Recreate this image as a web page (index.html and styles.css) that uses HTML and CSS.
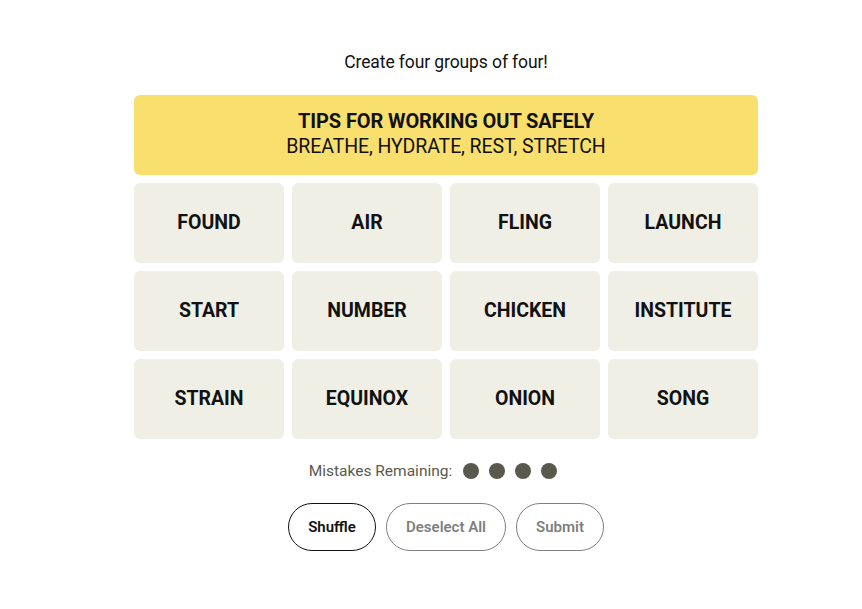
FILE: index.html
```html
<!DOCTYPE html>
<html lang="en">
<head>
  <meta charset="UTF-8" />
  <title>Connections</title>
  <link rel="stylesheet" href="styles.css">
</head>
<body>
  <div class="game">
    <p class="prompt">Create four groups of four!</p>

    <div class="board">
      <div class="solved yellow">
        <h3>TIPS FOR WORKING OUT SAFELY</h3>
        <p>BREATHE, HYDRATE, REST, STRETCH</p>
      </div>
      <div class="tiles">
        <div class="tile">FOUND</div>
        <div class="tile">AIR</div>
        <div class="tile">FLING</div>
        <div class="tile">LAUNCH</div>
        <div class="tile">START</div>
        <div class="tile">NUMBER</div>
        <div class="tile">CHICKEN</div>
        <div class="tile">INSTITUTE</div>
        <div class="tile">STRAIN</div>
        <div class="tile">EQUINOX</div>
        <div class="tile">ONION</div>
        <div class="tile">SONG</div>
      </div>
    </div>

    <div class="mistakes">
      <span>Mistakes Remaining:</span>
      <span class="dots"><i></i><i></i><i></i><i></i></span>
    </div>

    <div class="controls">
      <button class="btn active">Shuffle</button>
      <button class="btn wide">Deselect All</button>
      <button class="btn">Submit</button>
    </div>
  </div>
</body>
</html>
```

FILE: styles.css
```css
:root {
  --yellow: #f9df6d;
  --tile: #efefe6;
  --dot: #5a594e;
  --grey: #7f7f7f;
  --text: #121212;
  --radius: 6px;
}
* {
  margin: 0;
  padding: 0;
  box-sizing: border-box;
}
body {
  background: #fff;
  color: var(--text);
  font-family: Roboto, "Liberation Sans", sans-serif;
}
.game {
  width: 624px;
  margin-left: 134px;
  padding-top: 50px;
  display: flex;
  flex-direction: column;
  align-items: center;
}
.prompt {
  font-size: 17.5px;
  line-height: 24px;
  letter-spacing: -0.1px;
  margin-bottom: 21px;
}
.board {
  width: 100%;
  display: flex;
  flex-direction: column;
  gap: 8px;
}
.solved {
  height: 80px;
  border-radius: var(--radius);
  display: flex;
  flex-direction: column;
  align-items: center;
  justify-content: center;
  text-align: center;
  font-size: 19.5px;
  line-height: 25px;
  padding-bottom: 2px;
}
.solved.yellow {
  background: var(--yellow);
}
.solved h3 {
  font-size: 20px;
  font-weight: 700;
  letter-spacing: -0.1px;
}
.solved p {
  letter-spacing: -0.1px;
}
.tiles {
  display: grid;
  grid-template-columns: repeat(4, 150px);
  grid-auto-rows: 80px;
  gap: 8px;
}
.tile {
  background: var(--tile);
  border-radius: var(--radius);
  display: flex;
  align-items: center;
  justify-content: center;
  font-size: 19.5px;
  font-weight: 700;
  letter-spacing: 0;
  padding-bottom: 2px;
}
.mistakes {
  margin-top: 23px;
  margin-right: 26px;
  display: flex;
  align-items: center;
  gap: 11px;
  font-size: 15.5px;
  color: var(--dot);
  height: 18px;
}
.dots {
  display: flex;
  gap: 10px;
}
.dots i {
  width: 16px;
  height: 16px;
  border-radius: 50%;
  background: var(--dot);
}
.controls {
  margin-top: 23px;
  display: flex;
  gap: 10px;
}
.btn {
  width: 88px;
  height: 48px;
  border-radius: 24px;
  border: 1px solid var(--grey);
  background: #fff;
  color: var(--grey);
  font-family: Roboto, "Liberation Sans", sans-serif;
  font-size: 15px;
  font-weight: 600;
  cursor: pointer;
}
.btn.wide {
  width: 120px;
}
.btn.active {
  border-color: var(--text);
  color: var(--text);
}
```
